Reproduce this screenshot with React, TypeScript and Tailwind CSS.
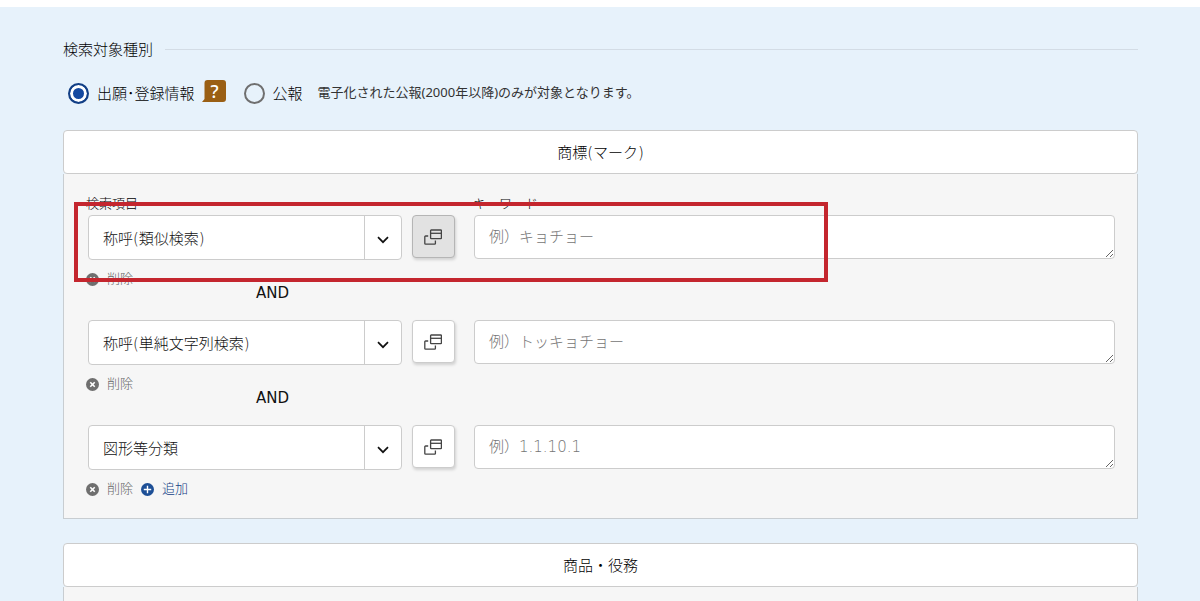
import { useState } from "react";

const TARGETS = ["称呼(類似検索)", "称呼(単純文字列検索)", "図形等分類"];

const ROWS = [
  { target: "称呼(類似検索)", placeholder: "例）キョチョー", active: true },
  { target: "称呼(単純文字列検索)", placeholder: "例）トッキョチョー", active: false },
  { target: "図形等分類", placeholder: "例）1.1.10.1", active: false },
];

function WindowsIcon() {
  return (
    <svg width="18" height="16" viewBox="0 0 18 16" fill="none" stroke="#444" strokeWidth="1.3" className="mr-[2px]" aria-hidden="true">
      <rect x="6.6" y="1" width="10.8" height="8.6" rx="0.6" />
      <path d="M6.6 4.3h10.8" />
      <path d="M4.2 7H1.6a.8.8 0 0 0-.8.8v6.6a.8.8 0 0 0 .8.8h9a.8.8 0 0 0 .8-.8v-2.8" />
    </svg>
  );
}

function CircleIcon({ plus = false }: { plus?: boolean }) {
  return (
    <svg width="13" height="13" viewBox="0 0 14 14" className="shrink-0" aria-hidden="true">
      <circle cx="7" cy="7" r="7" fill={plus ? "#1d4f96" : "#6f6f6f"} />
      <path
        d={plus ? "M7 3v8M3 7h8" : "M4.6 4.6l4.8 4.8M9.4 4.6L4.6 9.4"}
        stroke="#fff"
        strokeWidth={plus ? 1.5 : 1.7}
      />
    </svg>
  );
}

function SectionButton({ children }: { children: string }) {
  return (
    <button
      type="button"
      className="h-11 w-full shrink-0 rounded border border-[#ccc] bg-white pt-[2px] text-center font-['DejaVu_Sans','Noto_Sans_CJK_JP',sans-serif] text-[15px]"
    >
      {children}
    </button>
  );
}

function SearchRow({ row }: { row: (typeof ROWS)[number] }) {
  const [target, setTarget] = useState(row.target);

  return (
    <div className="flex items-start pl-6 pr-[22px] font-['DejaVu_Sans','Noto_Sans_CJK_JP',sans-serif]">
      <div className="relative w-[314px] shrink-0">
        <select
          aria-label="検索項目"
          value={target}
          onChange={(e) => setTarget(e.target.value)}
          className="block h-[45px] w-full appearance-none rounded border border-[#ccc] bg-white pl-[14px] pr-10 pt-1 text-[15px] text-[#111]"
        >
          {TARGETS.map((t) => (
            <option key={t}>{t}</option>
          ))}
        </select>
        <span className="pointer-events-none absolute inset-y-px right-px flex w-[37px] items-center justify-center border-l border-[#ccc]">
          <svg width="12" height="8" viewBox="0 0 12 8" fill="none" stroke="#111" strokeWidth="1.7" className="mt-1" aria-hidden="true">
            <path d="M1 1.2l5 5 5-5" />
          </svg>
        </span>
      </div>
      <button
        type="button"
        aria-label="検索項目の補助ツールを開く"
        className={
          row.active
            ? "ml-[10px] flex size-[43px] shrink-0 items-center justify-center rounded border border-[#b5b5b5] bg-[#e2e2e2] shadow-[1px_2px_3px_rgba(0,0,0,0.15)]"
            : "ml-[10px] flex size-[43px] shrink-0 items-center justify-center rounded border border-[#ccc] bg-white shadow-[1px_2px_3px_rgba(0,0,0,0.15)]"
        }
      >
        <WindowsIcon />
      </button>
      <textarea
        aria-label="キーワード"
        rows={1}
        placeholder={row.placeholder}
        className="ml-[19px] block h-11 min-w-0 flex-1 rounded border border-[#ccc] bg-white px-[14px] py-[10px] text-[15px] leading-[22px] placeholder:text-[#757575]"
      />
    </div>
  );
}

export default function App() {
  const [kind, setKind] = useState("application");

  return (
    <div className="flex min-h-screen flex-col border-t-[7px] border-white bg-[#e7f2fb] pl-[63px] pr-[62px] font-['Noto_Sans','Noto_Sans_CJK_JP',sans-serif] font-light text-black" lang="ja">
      <h2 className="mt-8 flex items-center gap-3 text-[15px] leading-5 after:h-px after:flex-1 after:bg-[#d3dce5]">
        検索対象種別
      </h2>

      <div className="mt-[22px] flex h-6 items-center pl-[5px]">
        <label className="flex items-center gap-2 text-[15px]">
          <input
            type="radio"
            name="kind"
            checked={kind === "application"}
            onChange={() => setKind("application")}
            className="size-[21px] appearance-none rounded-full border-2 border-[#6f6f6f] checked:border-[#123f85] checked:bg-[#1549a0] checked:shadow-[inset_0_0_0_3px_white]"
          />
          出願･登録情報
        </label>
        <button type="button" aria-label="ヘルプ" className="relative mb-1 ml-[7px] h-[22px] w-6">
          <svg viewBox="0 0 24 22" className="absolute inset-0" aria-hidden="true">
            <path d="M5.5 0h15.5a3 3 0 0 1 3 3v16a3 3 0 0 1-3 3H0l2.5-3V3a3 3 0 0 1 3-3z" fill="#9a5f14" />
          </svg>
          <span className="relative block pl-[2px] text-center text-[18px] font-medium leading-[22px] text-white">?</span>
        </button>
        <label className="ml-[18px] flex items-center gap-2 text-[15px]">
          <input
            type="radio"
            name="kind"
            checked={kind === "gazette"}
            onChange={() => setKind("gazette")}
            className="size-[21px] appearance-none rounded-full border-2 border-[#6f6f6f] checked:border-[#123f85] checked:bg-[#1549a0] checked:shadow-[inset_0_0_0_3px_white]"
          />
          公報
        </label>
        <p className="ml-[15px] text-[13px] font-normal text-[#333]">電子化された公報(2000年以降)のみが対象となります。</p>
      </div>

      <div className="mt-[25px] flex flex-col">
        <SectionButton>商標(マーク)</SectionButton>
        <section className="relative border-x border-b border-[#c8cdd1] bg-[#f6f6f6] pb-[22px] pt-[19px]">
          <div className="flex pl-[22px] text-[13px] leading-5">
            <span className="w-[387px]">検索項目</span>
            <span>キーワード</span>
          </div>
          <div className="mt-[2px] flex flex-col gap-5">
            {ROWS.map((row, i) => (
              <div key={row.target}>
                <SearchRow row={row} />
                <div className="mt-3 flex h-[14px] items-center gap-2 pl-[22px] text-[13px]">
                  <button type="button" className="flex items-center gap-2 text-[#666]">
                    <CircleIcon />
                    削除
                  </button>
                  {i === ROWS.length - 1 && (
                    <button type="button" className="flex items-center gap-2 text-[#123f85]">
                      <CircleIcon plus />
                      追加
                    </button>
                  )}
                </div>
                {i < ROWS.length - 1 && (
                  <p className="pl-48 font-['DejaVu_Sans',sans-serif] text-[15px] font-normal leading-[14px] text-[#111]">AND</p>
                )}
              </div>
            ))}
          </div>
          {/* highlight around the first condition */}
          <div className="pointer-events-none absolute left-[10px] top-7 h-20 w-[754px] border-4 border-[#c4262e]" />
        </section>
      </div>

      <div className="mt-6 flex flex-1 flex-col">
        <SectionButton>商品・役務</SectionButton>
        <section className="flex-1 border-x border-[#c8cdd1] bg-[#f6f6f6]" />
      </div>
    </div>
  );
}
